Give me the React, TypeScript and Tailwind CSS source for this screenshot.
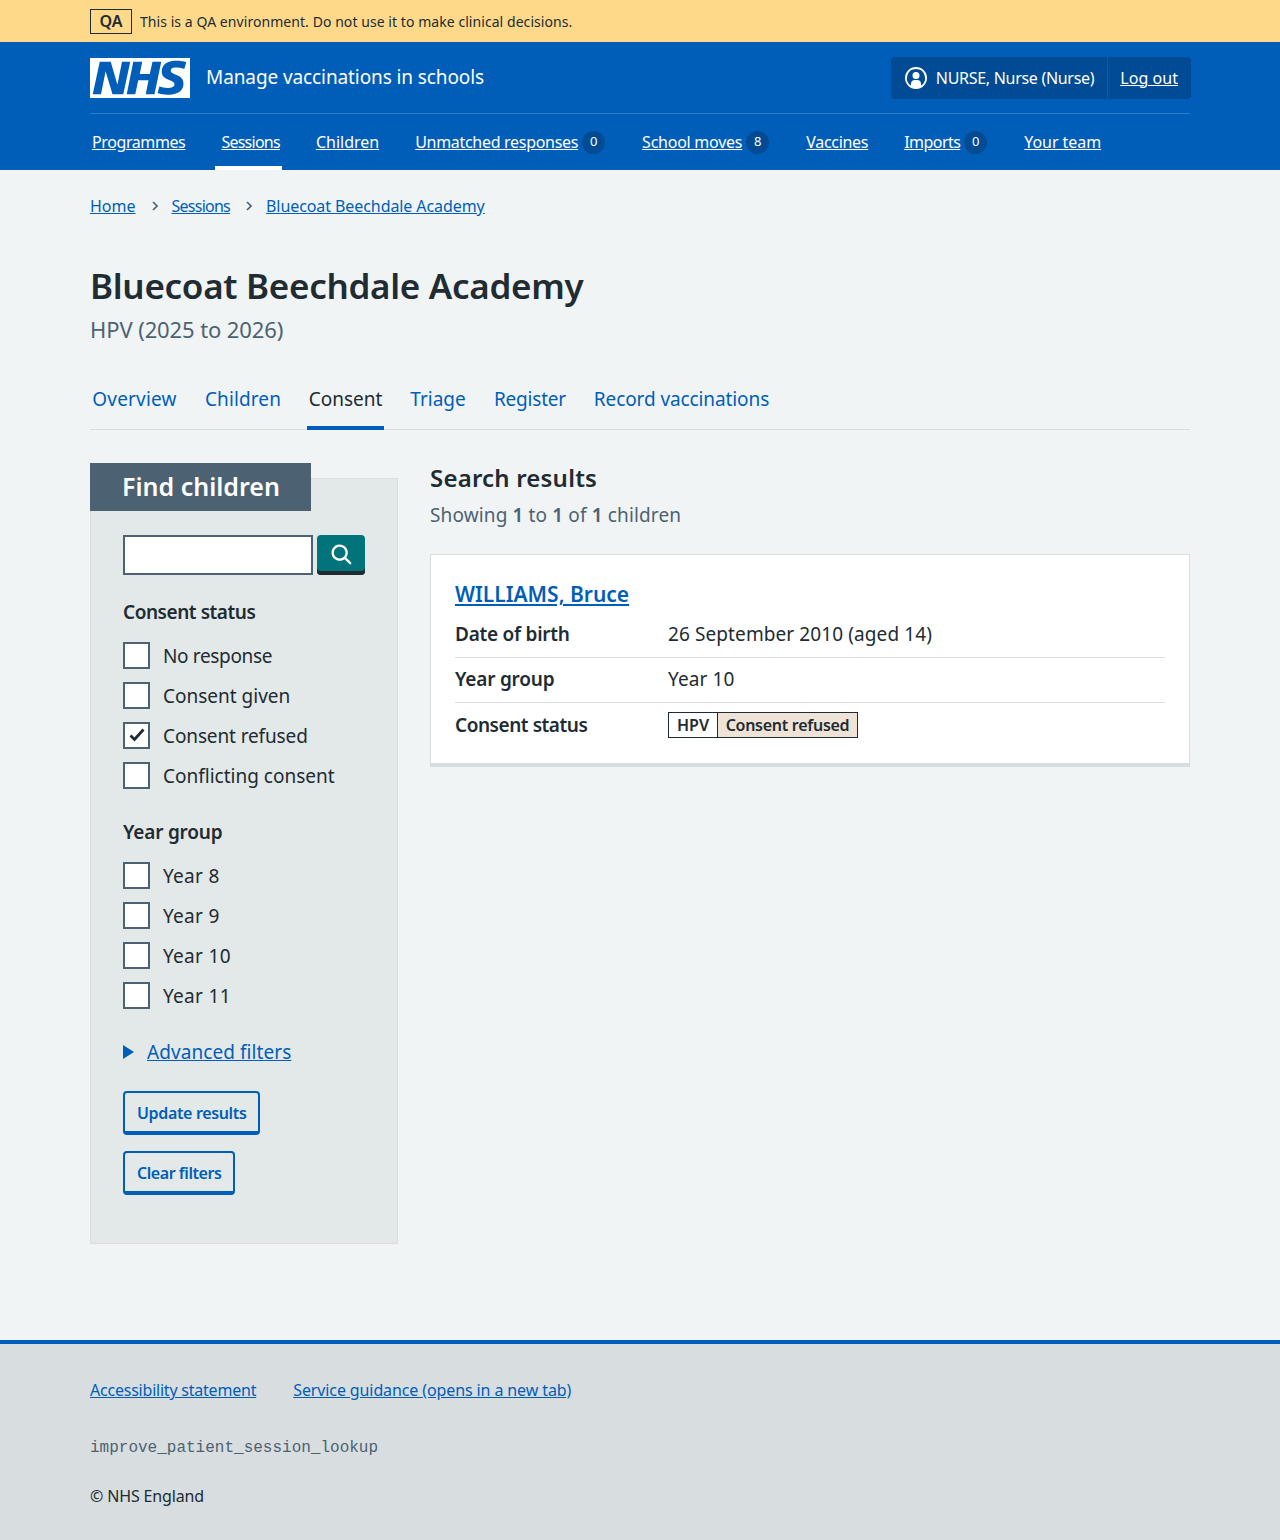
const sans = { fontFamily: '"Noto Sans", sans-serif' };

function NhsLogo() {
  return (
    <svg viewBox="0 0 40 16" className="w-[100px] h-[40px] block">
      <path fill="#fff" d="M0 0h40v16H0z" />
      <path
        fill="#005eb8"
        d="M3.9 1.5h4.4l2.6 9h.1l1.8-9h3.3l-2.8 13H9l-2.7-9h-.1l-1.8 9H1.1M17.3 1.5h3.6l-1 4.9h4L25 1.5h3.5l-2.7 13h-3.5l1.1-5.6h-4.1l-1.2 5.6h-3.4M37.7 4.4c-.7-.3-1.6-.6-2.9-.6-1.4 0-2.5.2-2.5 1.3 0 1.8 5.1 1.2 5.1 5.1 0 3.6-3.3 4.5-6.4 4.5-1.3 0-2.9-.3-4-.7l.8-2.7c.7.4 2.1.7 3.2.7s2.8-.2 2.8-1.5c0-2.1-5.1-1.3-5.1-5 0-3.4 2.9-4.4 5.8-4.4 1.6 0 3.1.2 4 .6"
      />
    </svg>
  );
}

function Chevron() {
  return (
    <svg viewBox="0 0 6 10" className="ml-[16px] mr-[14px] h-[10px] w-[6px]" fill="none" stroke="#4c6272" strokeWidth="1.6">
      <path d="M1 1l4 4-4 4" />
    </svg>
  );
}

function Count({ n }: { n: number }) {
  return (
    <span className="ml-[4px] mr-[1px] flex h-[23px] w-[23px] items-center justify-center rounded-full bg-[#004b93] text-[13px] text-white no-underline">
      {n}
    </span>
  );
}

const navItems = [
  { label: 'Programmes', cls: 'tracking-[-0.4px]' },
  { label: 'Sessions', cls: 'tracking-[-0.75px]', active: true },
  { label: 'Children', cls: '' },
  { label: 'Unmatched responses', cls: 'tracking-[-0.3px]', count: 0 },
  { label: 'School moves', cls: 'tracking-[-0.25px]', count: 8 },
  { label: 'Vaccines', cls: 'tracking-[-0.3px]' },
  { label: 'Imports', cls: 'tracking-[-0.55px]', count: 0 },
  { label: 'Your team', cls: 'tracking-[-0.05px]' },
];

const tabs = [
  { label: 'Overview', cls: 'w-[89px] tracking-[0.2px]' },
  { label: 'Children', cls: 'w-[80px] tracking-[0.1px]' },
  { label: 'Consent', cls: 'w-[77px]' },
  { label: 'Triage', cls: 'w-[60px]' },
  { label: 'Register', cls: 'w-[76px] tracking-[-0.2px]' },
  { label: 'Record vaccinations', cls: 'w-[179px] tracking-[-0.1px]' },
];

function Checkbox({ label, cls, checked }: { label: string; cls?: string; checked?: boolean }) {
  return (
    <div className="flex h-[40px] items-center">
      <span className="flex h-[27px] w-[27px] items-center justify-center border-2 border-[#4c6272] bg-white">
        {checked && (
          <svg viewBox="0 0 16 16" className="h-[16px] w-[16px]">
            <path d="M1.500 8.500l4 4L14.500 2.500" fill="none" stroke="#212b32" strokeWidth="2.800" />
          </svg>
        )}
      </span>
      <span className={`ml-[13px] pt-[2px] text-[19px] text-[#212b32] ${cls ?? ''}`}>{label}</span>
    </div>
  );
}

function SummaryRow({ label, cls, last, children }: { label: string; cls: string; last?: boolean; children: React.ReactNode }) {
  return (
    <div className={`flex h-[45px] items-center pb-[2px] ${last ? '' : 'border-b border-[#d8dde0]'}`}>
      <div className={`w-[213px] text-[19px] font-semibold text-[#212b32] ${cls}`}>{label}</div>
      <div className="text-[19px] tracking-[0.1px] text-[#212b32]">{children}</div>
    </div>
  );
}

export default function App() {
  return (
    <div className="min-h-[1540px] bg-[#f0f4f5] text-[#212b32]" style={sans}>
      {/* Environment banner */}
      <div className="h-[42px] bg-[#ffd98a]">
        <div className="mx-auto flex h-full w-[1100px] items-center">
          <span className="flex h-[25px] w-[42px] items-center justify-center border border-[#212b32] text-[16px] font-semibold">QA</span>
          <span className="ml-[8px] text-[14px] tracking-[0.06px]">This is a QA environment. Do not use it to make clinical decisions.</span>
        </div>
      </div>

      {/* Header */}
      <header className="h-[128px] bg-[#005eb8] text-white">
        <div className="mx-auto w-[1100px]">
          <div className="flex h-[72px] items-center justify-between border-b border-[#2d7cc8]">
            <div className="flex items-center">
              <NhsLogo />
              <span className="ml-[16px] text-[19px] tracking-[-0.1px]">Manage vaccinations in schools</span>
            </div>
            <div className="mr-[-1px] flex h-[42px] items-center rounded-[4px] bg-[#004b93] text-[16px]">
              <div className="flex h-full items-center border-r border-[#005eb8] pl-[13px] pr-[13px] tracking-[-0.3px]">
                <svg viewBox="0 0 24 24" className="mr-[8px] h-[24px] w-[24px]" fill="#fff">
                  <path d="M12 1a11 11 0 1 1 0 22 11 11 0 0 1 0-22Zm0 2a9 9 0 0 0-5 16.500V18a4 4 0 0 1 4-4h2a4 4 0 0 1 4 4v1.500A9 9 0 0 0 12 3Zm0 3a3.500 3.500 0 1 1-3.500 3.500A3.400 3.400 0 0 1 12 6Z" />
                </svg>
                NURSE, Nurse (Nurse)
              </div>
              <a className="pl-[12px] pr-[13px] underline tracking-[0.05px]">Log out</a>
            </div>
          </div>
          <nav className="flex h-[56px] text-[16px]">
            {navItems.map((item) => (
              <div
                key={item.label}
                className={`mr-[28px] flex items-center border-b-4 pl-[6px] pr-[2px] pt-[4px] first:ml-[-4px] ${item.active ? 'border-white' : 'border-transparent'}`}
              >
                <a className={`underline ${item.cls}`}>{item.label}</a>
                {item.count !== undefined && <Count n={item.count} />}
              </div>
            ))}
          </nav>
        </div>
      </header>

      <main className="mx-auto w-[1100px]">
        {/* Breadcrumbs */}
        <div className="flex h-[72px] items-center text-[16px] text-[#005eb8]">
          <a className="underline">Home</a>
          <Chevron />
          <a className="underline tracking-[-0.75px]">Sessions</a>
          <Chevron />
          <a className="underline tracking-[-0.08px]">Bluecoat Beechdale Academy</a>
        </div>

        <h1 className="mt-[20px] text-[35px] leading-[48px] font-semibold tracking-[-0.3px]">Bluecoat Beechdale Academy</h1>
        <p className="mt-[3px] text-[22px] leading-[32px] tracking-[-0.1px] text-[#4c6272]">HPV (2025 to 2026)</p>

        {/* Tabs */}
        <div className="mt-[32px] flex h-[53px] border-b border-[#d8dde0] text-[19px] text-[#005eb8]">
          {tabs.map((tab) => (
            <div
              key={tab.label}
              className={`mr-[24px] mb-[-1px] flex items-center justify-center border-b-4 pb-[4px] ${tab.cls} ${tab.label === 'Consent' ? 'border-[#005eb8] text-[#212b32]' : 'border-transparent'}`}
            >
              {tab.label}
            </div>
          ))}
        </div>

        <div className="mt-[33px] flex items-start">
          {/* Filters */}
          <aside className="w-[308px] shrink-0">
            <div className="relative z-10 flex h-[48px] w-[221px] items-center bg-[#4c6272] pl-[32px] text-[25px] font-semibold text-white">
              Find children
            </div>
            <div className="mt-[-33px] h-[766px] border border-[#d8dde0] bg-[#e3e8e8] pl-[32px] pt-[56px]">
              <div className="flex">
                <div className="h-[40px] w-[190px] border-2 border-[#4c6272] bg-white" />
                <button className="ml-[4px] flex h-[40px] w-[48px] items-center justify-center rounded-[4px] bg-[#00747a] pl-[2px] shadow-[inset_0_-4px_0_#212b32]">
                  <svg viewBox="0 0 24 24" className="h-[28px] w-[28px]" fill="#fff">
                    <path d="M19.710 18.290l-4.110-4.100a7 7 0 1 0-1.410 1.410l4.100 4.110a1 1 0 0 0 1.420 0 1 1 0 0 0 0-1.420zM5 10a5 5 0 1 1 5 5 5 5 0 0 1-5-5z" />
                  </svg>
                </button>
              </div>

              <h3 className="mt-[23px] text-[19px] leading-[28px] font-semibold tracking-[-0.45px]">Consent status</h3>
              <div className="mt-[9px]">
                <Checkbox label="No response" cls="tracking-[-0.35px]" />
                <Checkbox label="Consent given" />
                <Checkbox label="Consent refused" cls="tracking-[-0.12px]" checked />
                <Checkbox label="Conflicting consent" />
              </div>

              <h3 className="mt-[23px] text-[19px] leading-[28px] font-semibold tracking-[-0.2px]">Year group</h3>
              <div className="mt-[9px]">
                <Checkbox label="Year 8" cls="tracking-[0.3px]" />
                <Checkbox label="Year 9" cls="tracking-[0.3px]" />
                <Checkbox label="Year 10" cls="tracking-[0.3px]" />
                <Checkbox label="Year 11" cls="tracking-[0.3px]" />
              </div>

              <div className="mt-[23px] flex items-center text-[19px] text-[#005eb8]">
                <svg viewBox="0 0 11 14" className="mr-[13px] h-[14px] w-[11px]" fill="#005eb8">
                  <path d="M0 0l11 7-11 7z" />
                </svg>
                <a className="underline tracking-[0.07px]">Advanced filters</a>
              </div>

              <button className="mt-[24px] block h-[44px] rounded-[4px] border-2 border-b-4 border-[#005eb8] px-[12px] pt-[2px] text-[16px] font-semibold tracking-[-0.35px] text-[#005eb8]">
                Update results
              </button>
              <button className="mt-[16px] block h-[44px] rounded-[4px] border-2 border-b-4 border-[#005eb8] px-[12px] pt-[2px] text-[16px] font-semibold tracking-[-0.45px] text-[#005eb8]">
                Clear filters
              </button>
            </div>
          </aside>

          {/* Results */}
          <section className="ml-[32px] flex-1">
            <h2 className="text-[24px] leading-[30px] font-semibold tracking-[0.2px]">Search results</h2>
            <p className="mt-[8px] text-[19px] leading-[28px] tracking-[0.13px] text-[#4c6272]">
              Showing <b className="font-semibold">1</b> to <b className="font-semibold">1</b> of <b className="font-semibold">1</b> children
            </p>
            <div className="mt-[25px] h-[213px] border border-b-4 border-[#d8dde0] bg-white px-[24px] pt-[21px]">
              <a className="text-[21px] leading-[36px] font-semibold text-[#005eb8] underline">WILLIAMS, Bruce</a>
              <div className="mt-[1px]">
                <SummaryRow label="Date of birth" cls="tracking-[-0.25px]">26 September 2010 (aged 14)</SummaryRow>
                <SummaryRow label="Year group" cls="tracking-[-0.2px]">Year 10</SummaryRow>
                <SummaryRow label="Consent status" cls="tracking-[-0.45px] pt-[2px]" last>
                  <span className="flex h-[26px] w-[190px] border border-[#212b32] text-[16px] font-semibold leading-[24px] tracking-normal">
                    <span className="w-[49px] border-r border-[#212b32] text-center">HPV</span>
                    <span className="flex-1 bg-[#efe3d8] text-center tracking-[-0.27px]">Consent refused</span>
                  </span>
                </SummaryRow>
              </div>
            </div>
          </section>
        </div>
      </main>

      {/* Footer */}
      <footer className="mt-[96px] h-[200px] border-t-4 border-[#005eb8] bg-[#d8dde0]">
        <div className="mx-auto w-[1100px] pt-[34px]">
          <div className="flex text-[16px] leading-[24px] text-[#005eb8]">
            <a className="mr-[37px] underline tracking-[-0.22px]">Accessibility statement</a>
            <a className="underline tracking-[-0.11px]">Service guidance (opens in a new tab)</a>
          </div>
          <p className="mt-[34px] text-[16px] leading-[24px] text-[#4c6272]" style={{ fontFamily: '"Liberation Mono", monospace' }}>
            improve_patient_session_lookup
          </p>
          <p className="mt-[24px] text-[16px] leading-[24px] tracking-[-0.15px]">© NHS England</p>
        </div>
      </footer>
    </div>
  );
}
